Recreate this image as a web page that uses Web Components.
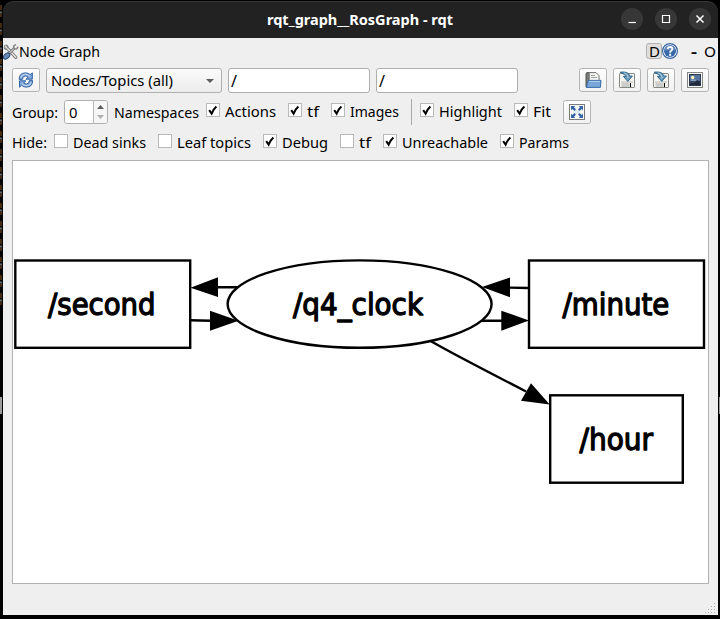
<!DOCTYPE html>
<html lang="en">
<head>
<meta charset="utf-8">
<title>rqt_graph__RosGraph - rqt</title>
<style>
html,body{margin:0;background:#000;overflow:hidden}
body{width:720px;height:619px;font-family:"Noto Sans",sans-serif}
</style>
</head>
<body>
<rqt-window></rqt-window>
<script>
class Base extends HTMLElement{
  constructor(){super();this.attachShadow({mode:'open'});}
  a(n,d=''){return this.getAttribute(n)??d;}
  connectedCallback(){this.shadowRoot.innerHTML=this.render();}
}

/* A text run set to an exact width. */
class FitLabel extends Base{
  render(){
    const w=this.a('w'),s=this.a('size','14.3'),b=this.a('weight','400'),t=this.textContent;
    return `<style>:host{display:block;width:${w}px;height:20px;flex:none}svg{display:block;overflow:visible}text{font:${b} ${s}px "Noto Sans",sans-serif;fill:var(--ink,#000)}</style>
    <svg width="${w}" height="20"><text x="0" y="15" textLength="${w}" lengthAdjust="spacingAndGlyphs">${t}</text></svg>`;
  }
}
customElements.define('fit-label',FitLabel);

class CheckBox extends Base{
  render(){
    return `<style>:host{display:flex;align-items:flex-start;gap:6px;flex:none}
    svg{display:block;margin-top:1px}</style>
    <svg width="14" height="14" viewBox="0 0 14 14"><rect x=".5" y=".5" width="13" height="13" fill="#fff" stroke="#b9b9b9"/>
    ${this.hasAttribute('checked')?'<path d="M3.2 7.2L5.6 10.6Q7.2 6.2 10.4 3.4" fill="none" stroke="#000" stroke-width="2"/>':''}</svg>
    <fit-label w="${this.a('w')}" style="margin-left:-1px">${this.textContent}</fit-label>`;
  }
}
customElements.define('check-box',CheckBox);

const disk=`<rect x=".5" y="1.5" width="15" height="14" rx=".6" fill="#f4f4f1" stroke="#858783"/><path d="M2.5 12h8M2.5 14h8" stroke="#a4a6a2"/><path d="M2 10h12" stroke="#b9bab7"/><path d="M11.5 11v4" stroke="#000"/>
<path d="M1 .2Q9.8-1 10.6 4H13.4L8.8 9.4 4.4 4.4H7.1Q6.4 2.4 1 .2Z" fill="#6f9fbe" stroke="#285f83" stroke-width=".9"/><path d="M5 1Q8.7 1.4 9 6" stroke="#b1d0df" fill="none"/>`;
const arrow=`<path d="M1.2 7.4Q1 .9 7.6.9 10.4.9 12.2 2.7L14.3.8V7.2H8L10 5.1Q8.8 3.9 7.4 4 4.5 4.1 4.4 7.4Z" fill="#7fa8d8" stroke="#2f61a5" stroke-width="1"/><path d="M2.6 6Q3.4 2.4 7.4 2.3 10 2.3 12 4.3" fill="none" stroke="#d2e1f3" stroke-width=".9"/>`;
const icons={
 refresh:`${arrow}<g transform="rotate(180 7.9 8)">${arrow}</g>`,
 open:`<path d="M1 15V1.5L2 .6H5V15Z" fill="#777977" stroke="#50524f"/><path d="M4.2 10V.6H11L14 3.6V10Z" fill="#f5f5f4" stroke="#70726f"/><path d="M6 3.5h4M6 5.5h6" stroke="#a0a29e"/><path d="M3.2 8.4H16L15.4 15.4H1.4Z" fill="#78a6d8" stroke="#396ca9"/><path d="M4 9.4H15" stroke="#b5d0eb"/>`,
 disk,
 image:`<rect x=".5" y=".5" width="15" height="15" fill="#f7f7f5" stroke="#858783"/><rect x="2.5" y="2.5" width="11" height="11" fill="#56749f" stroke="#2e3950"/><path d="M3 9H13V13H3Z" fill="#374560"/><path d="M7 11L10.5 8 13 10V13H3V11Z" fill="#202a3d"/><circle cx="5.7" cy="5.5" r="1.7" fill="#fff8bb"/><path d="M4 8.2h5" stroke="#9eb2c9"/>`,
 fit:`<rect x=".5" y=".5" width="15" height="15" fill="#f7f8f8" stroke="#777b7a"/><rect x="5.5" y="5.5" width="5" height="5" fill="#e2e7ec"/><path d="M2 2H6.2L5 3.3 7 5.3 5.3 7 3.3 5 2 6.2ZM14 2V6.2L12.7 5 10.7 7 9 5.3 11 3.3 9.8 2ZM2 14V9.8L3.3 11 5.3 9 7 10.7 5 12.7 6.2 14ZM14 14H9.8L11 12.7 9 10.7 10.7 9 12.7 11 14 9.8Z" fill="#3465a4"/>`,
 tools:`<path d="M2.5 2.4L12.8 13.3" stroke="#777" stroke-width="3.2" stroke-linecap="round"/><path d="M2.5 2.4L12.8 13.3" stroke="#e5e5e2" stroke-width="1.5" stroke-linecap="round"/><path d="M.8 3.7Q1 5.8 4.2 5.3M3.3.8Q5.7 1.6 5.1 4.3" fill="none" stroke="#777"/><path d="M6.2 9.3L11.5 4" stroke="#777" stroke-width="2.7"/><path d="M6.2 9.3L11.5 4" stroke="#eee" stroke-width="1"/><path d="M11 4.8L10.6 2.2 13 .5M11 4.8L13.6 5 15.2 2.8" fill="none" stroke="#858585" stroke-width="1.5"/><ellipse cx="3.6" cy="12" rx="2.4" ry="3.8" transform="rotate(45 3.6 12)" fill="#668bb9" stroke="#26456d"/>`,
 help:`<circle cx="8" cy="8" r="7.4" fill="#fff" stroke="#3665a5" stroke-width="1.2"/><circle cx="8" cy="8" r="6" fill="#3868a7"/><path d="M2.5 8Q5 6.5 13.5 7A5.6 5.6 0 0 0 2.5 8Z" fill="#6289bd"/><path d="M5.6 6.2Q5.8 4 8 4 10.4 4 10.4 6 10.4 7.2 9.2 7.8 8.1 8.4 8.1 9.7" fill="none" stroke="#fff" stroke-width="1.8"/><rect x="7.1" y="10.8" width="2" height="2" fill="#fff"/>`
};
class RqtIcon extends Base{
  render(){return `<style>:host{display:block;width:16px;height:16px;flex:none}svg{display:block;overflow:visible}</style><svg width="16" height="16" viewBox="0 0 16 16">${icons[this.a('name')]}</svg>`;}
}
customElements.define('rqt-icon',RqtIcon);

class ToolButton extends Base{
  render(){return `<style>:host{display:flex;box-sizing:border-box;width:28px;height:24px;flex:none;align-items:center;justify-content:center;border:1px solid #b4b4b4;border-radius:2.5px;background:linear-gradient(#fdfdfd,#f1f1f1)}</style><rqt-icon name="${this.a('icon')}"></rqt-icon>`;}
}
customElements.define('tool-button',ToolButton);

class TextField extends Base{
  render(){return `<style>:host{display:block;box-sizing:border-box;width:142px;height:25px;flex:none;border:1px solid #adadad;border-radius:3px;background:#fff;padding:3px 0 0 2px}</style><fit-label w="6" size="17">${this.textContent}</fit-label>`;}
}
customElements.define('text-field',TextField);

class ComboBox extends Base{
  render(){return `<style>:host{display:flex;box-sizing:border-box;width:176px;height:25px;flex:none;border:1px solid #b0b0b0;border-radius:3px;background:linear-gradient(#fbfbfb,#ececec);padding:2px 7px 0 4px;justify-content:space-between}svg{margin-top:7px}</style><fit-label w="122">${this.textContent}</fit-label><svg width="8" height="6"><path d="M0 1H8L4 5Z" fill="#5d5d5d"/></svg>`;}
}
customElements.define('combo-box',ComboBox);

class SpinBox extends Base{
  render(){return `<style>:host{display:flex;box-sizing:border-box;width:44px;height:24px;flex:none;border:1px solid #b0b0b0;border-radius:3px;background:#fff;overflow:hidden}.v{flex:1;padding:2px 0 0 4px}.s{width:13px;border-left:1px solid #b8b8b8;background:#f6f6f6}svg{display:block}</style><div class="v"><fit-label w="8.5">${this.textContent}</fit-label></div><div class="s"><svg width="13" height="22"><path d="M3 8H10L6.5 4Z" fill="#5d5d5d"/><path d="M3 14H10L6.5 18Z" fill="#b0b0b0"/></svg></div>`;}
}
customElements.define('spin-box',SpinBox);

class TitleBar extends Base{
  render(){return `<style>:host{display:grid;grid-template-columns:1fr 186px 1fr;height:37px;background:#222;border-top:1px solid #363636;box-sizing:border-box;border-radius:11px 11px 0 0;--ink:#fff}
  fit-label{grid-column:2;margin:8px 0 0 -1px}.b{display:flex;gap:12px;justify-content:flex-end;padding:6px 7px 0 0}.b svg{display:block;flex:none}</style>
  <fit-label w="186" weight="700" size="14.2">${this.textContent}</fit-label>
  <div class="b">${['M7.5 14.5H15','M7.5 7.5H14.5V14.5H7.5Z','M7.5 7.5L14.5 14.5M14.5 7.5L7.5 14.5'].map((d,i)=>`<svg width="22" height="22"><circle cx="11" cy="11" r="11" fill="#373737"/><path d="${d}" fill="none" stroke="#fff" stroke-width="${i==2?1.5:1.2}"/></svg>`).join('')}</div>`;}
}
customElements.define('title-bar',TitleBar);

class GraphView extends Base{
  render(){
    const t=(x,y,w,s)=>`<text x="${x}" y="${y}" textLength="${w}" lengthAdjust="spacingAndGlyphs">${s}</text>`;
    return `<style>:host{display:block;box-sizing:border-box;width:697px;height:424px;border:1px solid #b2b2b2;background:#fff}svg{display:block}text{font:29.3px "DejaVu Sans",sans-serif;stroke:#000;stroke-width:1.3;stroke-linejoin:round}</style>
    <svg width="695" height="422" viewBox="13 161 695 422"><g fill="none" stroke="#000" stroke-width="2.4">
    <rect x="15.3" y="260.5" width="174.9" height="87.3"/><rect x="529" y="260.5" width="175" height="87.3"/><rect x="550.2" y="395.3" width="132.6" height="87.4"/><ellipse cx="359.6" cy="304.1" rx="132" ry="43.7"/>
    <path d="M238 287.3H217M190 320.2L211 320.7M528 288L510 287.6M482 320.8H502M431 341.3Q455 355 526 391.5"/></g>
    <path d="M190.5 287.8L218 277.3V297ZM238.5 320.8L210 310.8V330.7ZM482 287L510 277.5V297.2ZM529 320.4L501.3 310.8V330.7ZM549.7 404.5L531 383.3 521 400.7Z"/>
    ${t(48,315,107.5,'/second')}${t(293,315,130,'/q4_clock')}${t(562.4,315,107,'/minute')}${t(579.5,450,73.5,'/hour')}</svg>`;
  }
}
customElements.define('graph-view',GraphView);

class RqtWindow extends Base{
  render(){return `<style>
  :host{display:flex;width:720px;height:619px;background:#000}
  .edge{width:3px;flex:none}.edge svg,.right svg{display:block}
  .win{width:715px;height:614px;margin-top:1px;flex:none;display:flex;flex-direction:column}
  .body{flex:1;background:#efefef;display:flex;flex-direction:column}
  .row{display:flex;align-items:flex-start;flex:none}
  .dock{height:30px;padding:4px 2px 0 0;box-sizing:border-box}
  .sp{flex:1}
  .d{display:flex;box-sizing:border-box;width:16px;height:16px;border:1px solid #b0b0b0;border-radius:3px;background:#dedede;justify-content:center;margin-top:1px}.d fit-label{margin-top:-2px}
  .r1{padding:0 9px;height:32px}.r2{padding-left:9px;height:32px}.r3{padding-left:9px;height:28px}
  .sep{width:1px;height:26px;background:#a9a9a9;margin:-1px 8px 0 12px}
  graph-view{margin-left:9px}
  .foot{flex:1;display:flex;justify-content:flex-end;align-items:flex-end}
  </style>
  <div class="edge"><svg width="3" height="619"><defs><pattern id="p" width="3" height="18" y="4" patternUnits="userSpaceOnUse"><path d="M1 1V6M1 10V13" stroke="#6b4118" stroke-width="1.3"/><rect y="7.5" width="2" height="2" fill="#666"/></pattern></defs><rect width="3" height="305" fill="url(#p)"/><rect y="397" width="2" height="17" fill="#999"/></svg></div>
  <div class="win"><title-bar>rqt_graph__RosGraph - rqt</title-bar>
  <div class="body">
   <div class="row dock"><rqt-icon name="tools" style="margin-top:1.5px"></rqt-icon><fit-label w="81">Node Graph</fit-label><div class="sp"></div><div class="d"><fit-label w="11">D</fit-label></div><rqt-icon name="help" style="margin-top:1px"></rqt-icon><fit-label w="6" weight="700" style="margin-left:13px">-</fit-label><fit-label w="12" style="margin-left:7px">O</fit-label></div>
   <div class="row r1"><tool-button icon="refresh"></tool-button><combo-box style="margin-left:6px">Nodes/Topics (all)</combo-box><text-field style="margin-left:6px">/</text-field><text-field style="margin-left:6px">/</text-field><div class="sp"></div><div class="row" style="gap:6px"><tool-button icon="open"></tool-button><tool-button icon="disk"></tool-button><tool-button icon="disk"></tool-button><tool-button icon="image"></tool-button></div></div>
   <div class="row r2"><fit-label w="46" style="margin-top:3px">Group:</fit-label><spin-box style="margin-left:6px">0</spin-box><fit-label w="85" style="margin:3px 0 0 6px">Namespaces</fit-label>
    <div class="row" style="margin:2px 0 0 7px;gap:12px"><check-box checked w="51">Actions</check-box><check-box checked w="12">tf</check-box><check-box checked w="49">Images</check-box></div>
    <div class="sep"></div><div class="row" style="margin-top:2px;gap:12px"><check-box checked w="63">Highlight</check-box><check-box checked w="18">Fit</check-box></div><tool-button icon="fit" style="margin-left:12px"></tool-button></div>
   <div class="row r3"><fit-label w="35" style="margin-top:1px">Hide:</fit-label><div class="row" style="margin:1px 0 0 7px;gap:12px"><check-box w="73">Dead sinks</check-box><check-box w="74">Leaf topics</check-box><check-box checked w="46">Debug</check-box><check-box w="12">tf</check-box><check-box checked w="86">Unreachable</check-box><check-box checked w="50">Params</check-box></div></div>
   <graph-view></graph-view>
   <div class="foot"><svg width="14" height="14">${[[10,2],[7,5],[10,5],[4,8],[7,8],[10,8],[1,11],[4,11],[7,11],[10,11]].map(([x,y])=>`<rect x="${x}" y="${y}" width="1" height="1" fill="#aaa"/>`).join('')}</svg></div>
  </div></div>
  <div class="right"><svg width="2" height="619"><path d="M1 397H2V414H1Z" fill="#999"/></svg></div>`;}
}
customElements.define('rqt-window',RqtWindow);
</script>
</body>
</html>
